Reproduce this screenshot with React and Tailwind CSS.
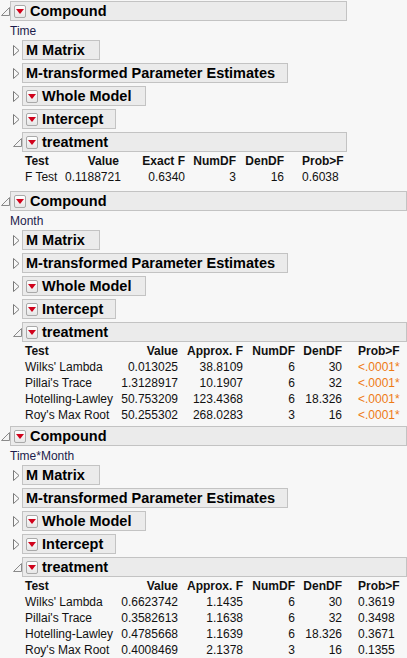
const FONT = { fontFamily: '"Liberation Sans", Arial, sans-serif' }

function OpenTri() {
  return (
    <svg width="9" height="9" viewBox="0 0 9 9" className="shrink-0">
      <path d="M8.5 0.5 L8.5 8.5 L0.5 8.5 Z" fill="#f4f4f4" stroke="#8a8a8a" strokeWidth="1" />
    </svg>
  )
}

function ClosedTri() {
  return (
    <svg width="7" height="11" viewBox="0 0 7 11" className="shrink-0">
      <path d="M0.5 0.5 L6 5.5 L0.5 10.5 Z" fill="#f8f8f8" stroke="#7a7a7a" strokeWidth="1" />
    </svg>
  )
}

function RedButton() {
  return (
    <span className="w-[12px] h-[13px] shrink-0 border border-[#a9a9a9] rounded-[2px] bg-gradient-to-b from-white to-[#e6e6e6] flex items-center justify-center">
      <svg width="8" height="5" viewBox="0 0 8 5">
        <path d="M0 0 L8 0 L4 5 Z" fill="#d0021b" />
      </svg>
    </span>
  )
}

function Header({ title, open, menu, wide, width, level }) {
  return (
    <div className={level === 0 ? "flex items-center h-[20px]" : "flex items-center h-[20px] pl-[13px]"}>
      <span className={level === 0 ? "w-[10px] flex justify-start pl-[1px]" : "w-[9px] flex"}>
        {open ? <OpenTri /> : <ClosedTri />}
      </span>
      <div
        className={
          "h-[20px] bg-[#ebebeb] border border-[#c3c3c3] flex items-center gap-[4px] pl-[3px] pr-[6px] " +
          (wide ? "flex-1 min-w-0" : "")
        }
        style={width ? { width } : undefined}
      >
        {menu && <RedButton />}
        <span className="font-bold text-[14.5px] text-black leading-none whitespace-nowrap">{title}</span>
      </div>
    </div>
  )
}

function Table({ cols, headers, rows, orange }) {
  return (
    <div className="pl-[25px] pt-[1px] text-[12px] text-[#111]">
      <div className="flex h-[16px] items-center font-bold">
        {headers.map((h, i) => (
          <div key={i} className={cols[i]}>{h}</div>
        ))}
      </div>
      {rows.map((r, ri) => (
        <div key={ri} className="flex h-[16px] items-center">
          {r.map((c, i) => (
            <div key={i} className={cols[i] + (orange && i === r.length - 1 ? " text-[#ee7a14]" : "")}>{c}</div>
          ))}
        </div>
      ))}
    </div>
  )
}

const cols1 = [
  "w-[40px] text-left",
  "w-[54px] text-right",
  "w-[66px] text-right",
  "w-[51px] text-right",
  "w-[48px] text-right",
  "w-[60px] pl-[18px] text-left",
]

const cols2 = [
  "w-[93px] text-left whitespace-nowrap",
  "w-[60px] text-right",
  "w-[65px] text-right",
  "w-[52px] text-right",
  "w-[47px] text-right",
  "w-[60px] pl-[16px] text-left",
]

const multiHead = ["Test", "Value", "Approx. F", "NumDF", "DenDF", "Prob>F"]

function Compound({ label, width, children }) {
  return (
    <div className="flex flex-col">
      <Header title="Compound" open menu level={0} wide={!width} width={width} />
      <div className="pl-[10px] h-[19px] pt-[2px] text-[12px] text-[#1c1c4c] leading-[16px]">{label}</div>
      <div className="flex flex-col gap-[3px]">
        <Header title="M Matrix" width={78} level={1} />
        <Header title="M-transformed Parameter Estimates" width={266} level={1} />
        <Header title="Whole Model" menu width={124} level={1} />
        <Header title="Intercept" menu width={94} level={1} />
        <Header title="treatment" open menu level={1} wide={!width} width={width ? width - 12 : undefined} />
      </div>
      {children}
    </div>
  )
}

export default function App() {
  return (
    <div className="w-[407px] h-[658px] bg-[#f7f7f7] overflow-hidden pt-[1px]" style={FONT}>
      <Compound label="Time" width={337}>
        <Table
          cols={cols1}
          headers={["Test", "Value", "Exact F", "NumDF", "DenDF", "Prob>F"]}
          rows={[["F Test", "0.1188721", "0.6340", "3", "16", "0.6038"]]}
        />
      </Compound>
      <div className="h-[6px]" />
      <Compound label="Month">
        <Table
          cols={cols2}
          headers={multiHead}
          orange
          rows={[
            ["Wilks' Lambda", "0.013025", "38.8109", "6", "30", "<.0001*"],
            ["Pillai's Trace", "1.3128917", "10.1907", "6", "32", "<.0001*"],
            ["Hotelling-Lawley", "50.753209", "123.4368", "6", "18.326", "<.0001*"],
            ["Roy's Max Root", "50.255302", "268.0283", "3", "16", "<.0001*"],
          ]}
        />
      </Compound>
      <div className="h-[3px]" />
      <Compound label="Time*Month">
        <Table
          cols={cols2}
          headers={multiHead}
          rows={[
            ["Wilks' Lambda", "0.6623742", "1.1435", "6", "30", "0.3619"],
            ["Pillai's Trace", "0.3582613", "1.1638", "6", "32", "0.3498"],
            ["Hotelling-Lawley", "0.4785668", "1.1639", "6", "18.326", "0.3671"],
            ["Roy's Max Root", "0.4008469", "2.1378", "3", "16", "0.1355"],
          ]}
        />
      </Compound>
    </div>
  )
}
